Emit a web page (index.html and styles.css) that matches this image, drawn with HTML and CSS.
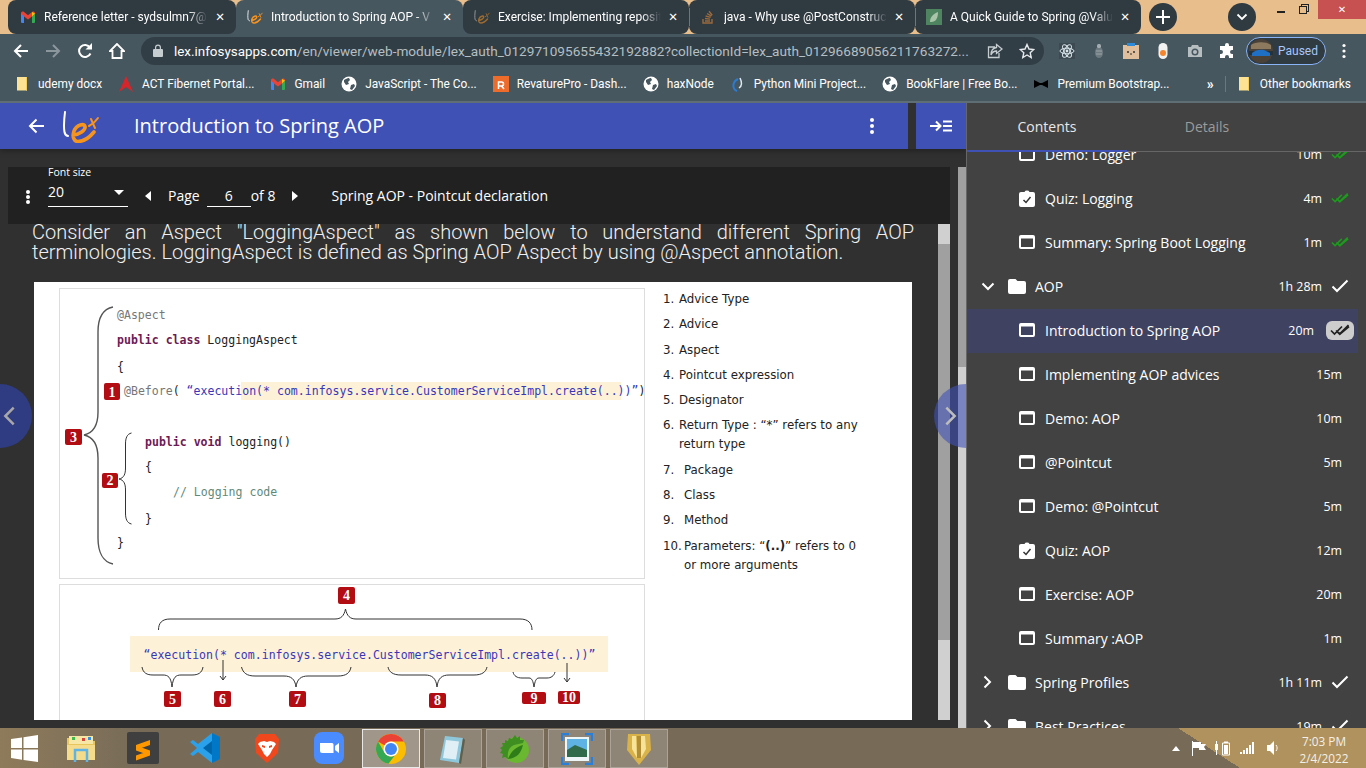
FILE: index.html
```html
<!DOCTYPE html>
<html lang="en">
<head>
<meta charset="utf-8">
<title>Introduction to Spring AOP</title>
<link rel="stylesheet" href="styles.css">
</head>
<body>
<svg class="defs" aria-hidden="true">
  <symbol id="gmail" viewBox="0 0 16 16"><path fill="#4285f4" d="M1 4h3v10H2a1 1 0 0 1-1-1z"/><path fill="#34a853" d="M12 4h3v9a1 1 0 0 1-1 1h-2z"/><path fill="#ea4335" d="M1 4.500C1 2.500 3 2 4 3l4 3.200L12 3c1-1 3-.5 3 1.500L12 7.500 8 10.500 4 7.500z"/><path fill="#fbbc04" d="M12 3l3 1.500L12 7.500z"/></symbol>
  <symbol id="lex" viewBox="0 0 38 32"><path fill="none" stroke="#fff" stroke-width="2" stroke-linecap="round" d="M3 1c-1 8-1.500 15-.5 20 .3 2 1.500 3.500 3.500 4"/><path fill="none" stroke="#f7941d" stroke-width="3.600" stroke-linecap="round" d="M11 24C17 24 24 19 23 15.500 22 12.500 15 13 12 20 10 26 12 30.500 16 30.500 22 30.500 27 27 32 21"/><path fill="none" stroke="#f7941d" stroke-width="2" stroke-linecap="round" d="M29 8l4 9M36 7c-2 3-5 6-9 8"/></symbol>
  <symbol id="globe" viewBox="0 0 16 16"><circle cx="8" cy="8" r="7.500" fill="#fff"/><path fill="#47575f" d="M3 4c2-1 3-2 5-2l1 2-2 2 1 2-3 1-2-3zM10 9l3-1 1 2-3 4-2-1z"/></symbol>
  <symbol id="bmfolder" viewBox="0 0 16 16"><path fill="#fde293" d="M3 1h6l4 0v13.500H3z"/><path fill="#f5ce62" d="M12 1h1v13.500h-1z"/></symbol>
  <symbol id="doc" viewBox="0 0 16 14"><path fill="#fff" fill-rule="evenodd" d="M2 0h12a2 2 0 0 1 2 2v10a2 2 0 0 1-2 2H2a2 2 0 0 1-2-2V2a2 2 0 0 1 2-2zM2 3.500V12h12V3.500z"/></symbol>
  <symbol id="quiz" viewBox="0 0 16 17"><path fill="#fff" d="M2 2h3.500a2.600 2 0 0 1 5 0H14a2 2 0 0 1 2 2v11a2 2 0 0 1-2 2H2a2 2 0 0 1-2-2V4a2 2 0 0 1 2-2z"/><path fill="none" stroke="#333" stroke-width="1.500" d="M4.500 10l2.500 2.500 4.500-5.500"/></symbol>
  <symbol id="folder" viewBox="0 0 18 15"><path fill="#fff" d="M2 0h5.500L9.500 2H16a2 2 0 0 1 2 2v9a2 2 0 0 1-2 2H2a2 2 0 0 1-2-2V2a2 2 0 0 1 2-2z"/></symbol>
  <symbol id="dbl" viewBox="0 0 20 12"><path fill="none" stroke="currentColor" stroke-width="1.700" d="M1 6.500l3.500 3.500L12 2.500M6 6.500l3.500 3.500L18.500 1M8 8l2 2L19 2.500"/></symbol>
  <symbol id="tick" viewBox="0 0 18 14"><path fill="none" stroke="#fff" stroke-width="2" d="M1.500 7.500l4.500 4.500L16.500 1.500"/></symbol>
  <symbol id="chrome" viewBox="0 0 32 32"><circle cx="16" cy="16" r="15" fill="#fbbc04"/><path fill="#ea4335" d="M16 1A15 15 0 0 1 29 8.500H16A7.500 7.500 0 0 0 9.500 12.250L3 8.500A15 15 0 0 1 16 1z"/><path fill="#34a853" d="M3 8.500L9.500 19.750A7.500 7.500 0 0 0 19.750 22.500L13.400 30.800A15 15 0 0 1 3 8.500z"/><circle cx="16" cy="16" r="7.500" fill="#fff"/><circle cx="16" cy="16" r="6" fill="#4285f4"/></symbol>
</svg>

<header class="tabstrip">
  <div class="tabs">
    <div class="tab"><svg class="favicon"><use href="#gmail"/></svg><span class="tab-title">Reference letter - sydsulmn7@</span><span class="tab-x">✕</span></div>
    <div class="tab tab-active"><svg class="favicon"><use href="#lex"/></svg><span class="tab-title">Introduction to Spring AOP - V</span><span class="tab-x">✕</span></div>
    <div class="tab tab-narrow"><svg class="favicon dim"><use href="#lex"/></svg><span class="tab-title">Exercise: Implementing reposit</span><span class="tab-x">✕</span></div>
    <div class="tab tab-narrow sep"><svg class="favicon" viewBox="0 0 16 16"><path fill="none" stroke="#9a6a3c" stroke-width="1.400" d="M3 10v4h9v-4M5 12h5M5 9.500l5 .6M5.600 7l5 1.400M7 4.500l4.400 2.600M9 2.200l3.200 4"/></svg><span class="tab-title">java - Why use @PostConstruc</span><span class="tab-x">✕</span></div>
    <div class="tab tab-narrow sep"><svg class="favicon" viewBox="0 0 16 16"><rect width="16" height="16" fill="#4e8560"/><path fill="#a9c4a8" d="M4 13c0-5 3-8 8-10 0 6-2 10-7 10z"/></svg><span class="tab-title">A Quick Guide to Spring @Valu</span><span class="tab-x">✕</span></div>
  </div>
  <button class="round new-tab" type="button"><svg viewBox="0 0 14 14"><path stroke="#fff" stroke-width="2" d="M7 0v14M0 7h14"/></svg></button>
  <button class="round tab-menu" type="button"><svg viewBox="0 0 12 8"><path fill="none" stroke="#fff" stroke-width="1.800" d="M1.500 1.500L6 6l4.500-4.500"/></svg></button>
  <div class="winctl">
    <span class="min"></span>
    <span class="max"></span>
    <span class="close">✕</span>
  </div>
</header>

<nav class="toolbar">
  <button class="tb" type="button"><svg viewBox="0 0 16 16"><path fill="none" stroke="#fff" stroke-width="2" d="M15 8H2M8 2L2 8l6 6"/></svg></button>
  <button class="tb" type="button"><svg viewBox="0 0 16 16"><path fill="none" stroke="#8b979d" stroke-width="2" d="M1 8h13M8 2l6 6-6 6"/></svg></button>
  <button class="tb" type="button"><svg viewBox="0 0 16 16"><path fill="none" stroke="#fff" stroke-width="2" d="M13.500 10.500A6 6 0 1 1 13 4.500"/><path fill="#fff" d="M15 0v6.500H8.500z"/></svg></button>
  <button class="tb" type="button"><svg viewBox="0 0 16 16"><path fill="none" stroke="#fff" stroke-width="1.800" d="M8 1L1 8h2.500v7h9V8H15z"/></svg></button>
  <div class="omnibox">
    <svg class="lock" viewBox="0 0 10 13"><path fill="#c5cdd1" d="M1 5h1V3.500a3 3 0 0 1 6 0V5h1a1 1 0 0 1 1 1v6a1 1 0 0 1-1 1H1a1 1 0 0 1-1-1V6a1 1 0 0 1 1-1zm2.200 0h3.600V3.500a1.800 1.800 0 0 0-3.600 0z"/></svg>
    <span class="url"><b>lex.infosysapps.com</b>/en/viewer/web-module/lex_auth_012971095655432192882?collectionId=lex_auth_01296689056211763272...</span>
    <svg class="omni-ic" viewBox="0 0 16 16"><path fill="none" stroke="#c5cdd1" stroke-width="1.300" d="M8 4H1.500v10.500H12V10M9.500 1.500L15 6l-5.500 4.500V8C6.500 8 5 9.500 4 12c0-4 2-7 5.500-7.500z"/></svg>
    <svg class="omni-ic star" viewBox="0 0 16 16"><path fill="none" stroke="#e6eaec" stroke-width="1.400" d="M8 1.500l2 4.500 4.800.5-3.600 3.200 1 4.800L8 12l-4.200 2.500 1-4.800L1.200 6.500 6 6z"/></svg>
  </div>
  <div class="ext">
    <button class="tb" type="button"><svg viewBox="0 0 16 16"><rect width="16" height="16" fill="#3d4a51"/><g fill="none" stroke="#d8e4ea" stroke-width="1"><ellipse cx="8" cy="8" rx="7" ry="2.800"/><ellipse cx="8" cy="8" rx="7" ry="2.800" transform="rotate(60 8 8)"/><ellipse cx="8" cy="8" rx="7" ry="2.800" transform="rotate(120 8 8)"/></g><circle cx="8" cy="8" r="1.400" fill="#d8e4ea"/></svg></button>
    <button class="tb" type="button"><svg viewBox="0 0 16 16"><ellipse cx="8" cy="9.500" rx="4" ry="5.500" fill="#6d7a7f"/><rect x="6" y="1" width="4" height="4" rx="1.500" fill="#a3adb1"/><path stroke="#9aa4a8" d="M5 8h6M5 11h6"/></svg></button>
    <button class="tb" type="button"><svg viewBox="0 0 16 16"><rect y="2" width="16" height="14" fill="#e2bf9c"/><rect x="4" width="8" height="3" fill="#2e8bdc"/><circle cx="5" cy="9" r="1" fill="#333"/><circle cx="11" cy="9" r="1" fill="#333"/><path stroke="#333" d="M7 11h2"/></svg></button>
    <button class="tb" type="button"><svg viewBox="0 0 16 16"><rect x="3.500" width="9" height="16" rx="4.500" fill="#f2f2f2"/><circle cx="8" cy="10" r="3" fill="#f5862e"/></svg></button>
    <button class="tb" type="button"><svg viewBox="0 0 16 16"><path fill="#b7bec1" d="M1 4h3l1-2h6l1 2h3v10H1z"/><circle cx="8" cy="9" r="3.500" fill="#47575f"/><circle cx="8" cy="9" r="2" fill="#b7bec1"/></svg></button>
    <button class="tb" type="button"><svg viewBox="0 0 16 16"><path fill="#fff" d="M6 2a2 2 0 0 1 4 0v1h4v4h-1a2 2 0 0 0 0 4h1v4h-4v-1a2 2 0 0 0-4 0v1H1v-4h1a2 2 0 0 0 0-4H1V3h5z"/></svg></button>
  </div>
  <div class="profile">
    <svg class="avatar" viewBox="0 0 24 24"><circle cx="12" cy="12" r="12" fill="#4a4238"/><path fill="#26323a" d="M0 12h24v4H0z"/><path fill="#1f6fc4" d="M3 14c3-3 8-4 12-3l6 3v3H3z"/><path fill="#8d7a5e" d="M2 6c4-3 14-4 20 0v4H2z"/></svg>
    <span>Paused</span>
  </div>
  <button class="tb" type="button"><svg viewBox="0 0 16 16"><g fill="#fff"><circle cx="8" cy="2.500" r="1.600"/><circle cx="8" cy="8" r="1.600"/><circle cx="8" cy="13.500" r="1.600"/></g></svg></button>
</nav>

<nav class="bookmarks">
  <span class="bm"><svg><use href="#bmfolder"/></svg>udemy docx</span>
  <span class="bm"><svg viewBox="0 0 16 16"><path fill="#d7262b" d="M8 0l7 16-7-5-7 5z"/></svg>ACT Fibernet Portal...</span>
  <span class="bm"><svg><use href="#gmail"/></svg>Gmail</span>
  <span class="bm"><svg><use href="#globe"/></svg>JavaScript - The Co...</span>
  <span class="bm"><svg viewBox="0 0 16 16"><rect width="16" height="16" fill="#ee6c2b"/><path fill="none" stroke="#fff" stroke-width="1.500" d="M5.500 13V6h3a2 2 0 0 1 0 4h-3M8.500 10l2.500 3"/></svg>RevaturePro - Dash...</span>
  <span class="bm"><svg><use href="#globe"/></svg>haxNode</span>
  <span class="bm"><svg viewBox="0 0 16 16"><path fill="none" stroke="#2b7bd1" stroke-width="2" d="M7 15C2 13 2 6 8 3"/><path fill="none" stroke="#dfe9f2" stroke-width="1.500" d="M9 12c3-2 3-6 1-10"/></svg>Python Mini Project...</span>
  <span class="bm"><svg><use href="#globe"/></svg>BookFlare | Free Bo...</span>
  <span class="bm"><svg viewBox="0 0 16 16"><path fill="#000" d="M1 4l6 3h2l6-3v8l-6-3H7l-6 3z"/></svg>Premium Bootstrap...</span>
  <span class="bm-more">»</span>
  <span class="bm bm-other"><svg><use href="#bmfolder"/></svg>Other bookmarks</span>
</nav>

<div class="app">
  <main class="viewer">
    <div class="appbar">
      <div class="appbar-main">
        <svg class="back" viewBox="0 0 16 16"><path fill="none" stroke="#fff" stroke-width="2" d="M16 8H2M8.500 1.500L2 8l6.500 6.500"/></svg>
        <svg class="logo"><use href="#lex"/></svg>
        <h1>Introduction to Spring AOP</h1>
        <svg class="kebab" viewBox="0 0 6 16"><g fill="#fff"><circle cx="3" cy="2" r="2"/><circle cx="3" cy="8" r="2"/><circle cx="3" cy="14" r="2"/></g></svg>
      </div>
      <div class="appbar-toggle"><svg viewBox="0 0 22 12"><path fill="none" stroke="#fff" stroke-width="2" d="M0 6h10M6 1.500L10.500 6 6 10.500M13 1.500h9M13 6h9M13 10.500h9"/></svg></div>
    </div>
    <div class="viewer-body">
      <div class="reader">
        <div class="pagebar">
          <svg class="pb-dots" viewBox="0 0 6 14"><g fill="#fff"><circle cx="3" cy="2" r="2"/><circle cx="3" cy="7" r="2"/><circle cx="3" cy="12" r="2"/></g></svg>
          <div class="fontsel">
            <span class="fontsel-label">Font size</span>
            <div class="fontsel-val"><span>20</span><i class="caret"></i></div>
          </div>
          <i class="tri tri-l"></i>
          <span class="pg-label">Page</span>
          <span class="pg-input">6</span>
          <span class="pg-of">of 8</span>
          <i class="tri tri-r"></i>
          <span class="pg-title">Spring AOP - Pointcut declaration</span>
        </div>
        <div class="reader-row">
          <article class="article">
            <p class="intro">Consider an Aspect "LoggingAspect" as shown below to understand different Spring AOP terminologies. LoggingAspect is defined as Spring AOP Aspect by using @Aspect annotation.</p>
            <div class="figure">
              <div class="figure-left">
                <svg class="panel panel-code" viewBox="60 289 584 289">
                  <rect x="241" y="382" width="380" height="18" fill="#fdf2d8"/>
                  <g class="code">
                    <text x="117" y="319" class="anno">@Aspect</text>
                    <text x="117" y="344"><tspan class="kw">public class</tspan> LoggingAspect</text>
                    <text x="117" y="371">{</text>
                    <text x="124" y="395"><tspan class="anno">@Before</tspan>( <tspan class="str">“execution(* com.infosys.service.CustomerServiceImpl.create(..))”</tspan>)</text>
                    <text x="145" y="446"><tspan class="kw">public void</tspan> logging()</text>
                    <text x="145" y="471">{</text>
                    <text x="173" y="496" class="cmt">// Logging code</text>
                    <text x="145" y="523">}</text>
                    <text x="117" y="547">}</text>
                  </g>
                  <path class="brace big" d="M113 307C103 309 98 318 98 332L98 412C98 425 93 433 84 435C93 437 98 445 98 458L98 538C98 552 103 562 113 564"/>
                  <path class="brace" d="M131.500 433C127 434 125.500 438 125.500 444L125.500 468C125.500 474 124 478 119 479C124 480 125.500 484 125.500 490L125.500 513C125.500 519 127 523 131.500 524"/>
                  <g class="badge"><rect x="104" y="383" width="16" height="17" rx="2"/><text x="112" y="397">1</text></g>
                  <g class="badge"><rect x="65" y="429" width="17" height="16" rx="2"/><text x="73.500" y="442">3</text></g>
                  <g class="badge"><rect x="102" y="473" width="16" height="15" rx="2"/><text x="110" y="485">2</text></g>
                </svg>
                <svg class="panel panel-expr" viewBox="60 585 584 135">
                  <rect x="130" y="636" width="478" height="36" fill="#fdf2d8"/>
                  <text class="code str" x="143.500" y="659">“execution(* com.infosys.service.CustomerServiceImpl.create(..))”</text>
                  <path class="brace" d="M158.500 630C158.500 623 162 619 170 619L335 619C341 619 344 616 345.500 609C347 616 350 619 356 619L520 619C528 619 532 623 532 630"/>
                  <path class="brace" d="M142 667C143 673 147 675 153 675L163 675C168 675 171 677 172 687C173 677 176 675 181 675L192 675C198 675 202 673 203 667"/>
                  <path class="brace" d="M241.500 667C243 673 247 676 255 676L284 676C291 676 295 679 296 687C297 679 301 676 308 676L338 676C346 676 350 673 351 667"/>
                  <path class="brace" d="M388 667C389 672 393 675 401 675L425 675C432 675 436 678 437 687C438 678 442 675 449 675L474 675C482 675 486 672 487 667"/>
                  <path class="brace" d="M513 672C514 676 517 678 522 678L529 678C532 678 533 681 534 687C535 681 536 678 539 678L547 678C551 678 554 676 555 672"/>
                  <path class="brace" d="M223 660V680M220 676L223 680L226 676M567 663V682M564 678L567 682L570 678"/>
                  <g class="badge"><rect x="338" y="587" width="17" height="17" rx="2"/><text x="346.500" y="600">4</text></g>
                  <g class="badge"><rect x="164" y="691" width="17" height="16" rx="2"/><text x="172.500" y="704">5</text></g>
                  <g class="badge"><rect x="214" y="691" width="17" height="16" rx="2"/><text x="222.500" y="704">6</text></g>
                  <g class="badge"><rect x="289" y="691" width="17" height="16" rx="2"/><text x="297.500" y="704">7</text></g>
                  <g class="badge"><rect x="429" y="693" width="17" height="15" rx="2"/><text x="437.500" y="705">8</text></g>
                  <g class="badge"><rect x="522" y="692" width="24" height="12" rx="2"/><text x="534" y="703">9</text></g>
                  <g class="badge"><rect x="558" y="691" width="22" height="13" rx="2"/><text x="569" y="702">10</text></g>
                </svg>
              </div>
              <ol class="legend">
                <li><span>1.</span><span>Advice Type</span></li>
                <li><span>2.</span><span>Advice</span></li>
                <li><span>3.</span><span>Aspect</span></li>
                <li><span>4.</span><span>Pointcut expression</span></li>
                <li><span>5.</span><span>Designator</span></li>
                <li><span>6.</span><span>Return Type : “*” refers to any<br>return type</span></li>
                <li class="wide"><span>7.</span><span>Package</span></li>
                <li class="wide"><span>8.</span><span>Class</span></li>
                <li class="wide"><span>9.</span><span>Method</span></li>
                <li class="wide"><span>10.</span><span>Parameters: “<b>(..)</b>” refers to 0<br>or more arguments</span></li>
              </ol>
            </div>
          </article>
          <div class="inner-scroll"><i class="sb-light sb-top"></i><i class="sb-track"></i><i class="sb-light sb-bottom"></i></div>
        </div>
      </div>
      <div class="outer-scroll"><i class="sb-track"></i><i class="sb-light"></i></div>
    </div>
    <div class="navcircle nav-prev"><svg viewBox="0 0 14 24"><path fill="none" stroke="#a8a8a8" stroke-width="3" d="M12 2L2 12l10 10"/></svg></div>
    <div class="navcircle nav-next"><svg viewBox="0 0 14 24"><path fill="none" stroke="#bdbdbd" stroke-width="3" d="M2 2l10 10L2 22"/></svg></div>
  </main>

  <aside class="sidebar">
    <div class="side-tabs">
      <span class="side-tab on">Contents</span>
      <span class="side-tab">Details</span>
    </div>
    <div class="toc">
      <ul class="toc-list">
        <li class="row"><svg class="ic"><use href="#doc"/></svg><span class="name">Demo: Logger</span><span class="time">10m</span><svg class="chk green"><use href="#dbl"/></svg></li>
        <li class="row"><svg class="ic quiz"><use href="#quiz"/></svg><span class="name">Quiz: Logging</span><span class="time">4m</span><svg class="chk green"><use href="#dbl"/></svg></li>
        <li class="row"><svg class="ic"><use href="#doc"/></svg><span class="name">Summary: Spring Boot Logging</span><span class="time">1m</span><svg class="chk green"><use href="#dbl"/></svg></li>
        <li class="row group"><svg class="chev" viewBox="0 0 14 9"><path fill="none" stroke="#fff" stroke-width="2" d="M1.500 1.500L7 7l5.500-5.500"/></svg><svg class="fold"><use href="#folder"/></svg><span class="name">AOP</span><span class="time">1h 28m</span><svg class="chk"><use href="#tick"/></svg></li>
        <li class="row active"><svg class="ic"><use href="#doc"/></svg><span class="name">Introduction to Spring AOP</span><span class="time">20m</span><span class="pill"><svg><use href="#dbl"/></svg></span></li>
        <li class="row"><svg class="ic"><use href="#doc"/></svg><span class="name">Implementing AOP advices</span><span class="time">15m</span></li>
        <li class="row"><svg class="ic"><use href="#doc"/></svg><span class="name">Demo: AOP</span><span class="time">10m</span></li>
        <li class="row"><svg class="ic"><use href="#doc"/></svg><span class="name">@Pointcut</span><span class="time">5m</span></li>
        <li class="row"><svg class="ic"><use href="#doc"/></svg><span class="name">Demo: @Pointcut</span><span class="time">5m</span></li>
        <li class="row"><svg class="ic quiz"><use href="#quiz"/></svg><span class="name">Quiz: AOP</span><span class="time">12m</span></li>
        <li class="row"><svg class="ic"><use href="#doc"/></svg><span class="name">Exercise: AOP</span><span class="time">20m</span></li>
        <li class="row"><svg class="ic"><use href="#doc"/></svg><span class="name">Summary :AOP</span><span class="time">1m</span></li>
        <li class="row group"><svg class="chev right" viewBox="0 0 9 14"><path fill="none" stroke="#fff" stroke-width="2" d="M1.500 1.500L7 7l-5.500 5.500"/></svg><svg class="fold"><use href="#folder"/></svg><span class="name">Spring Profiles</span><span class="time">1h 11m</span><svg class="chk"><use href="#tick"/></svg></li>
        <li class="row group"><svg class="chev right" viewBox="0 0 9 14"><path fill="none" stroke="#fff" stroke-width="2" d="M1.500 1.500L7 7l-5.500 5.500"/></svg><svg class="fold"><use href="#folder"/></svg><span class="name">Best Practices</span><span class="time">19m</span><svg class="chk"><use href="#tick"/></svg></li>
      </ul>
    </div>
  </aside>
</div>

<footer class="taskbar">
  <div class="tk-start"><svg viewBox="0 0 27 27"><path fill="#fff" d="M0 4l11-1.600V13H0zM12.500 2.200L27 0v13H12.500zM0 14.500h11v10.300L0 23zM12.500 14.500H27V27l-14.500-2z"/></svg></div>
  <div class="tk"><svg viewBox="0 0 32 32"><path fill="#e8c65e" d="M2 6h11l2 3h15v19H2z"/><path fill="#f7e7a6" d="M4 4h24v8H4z"/><rect x="7" y="5" width="3" height="3" fill="#3ebd4e"/><rect x="17" y="6" width="3" height="3" fill="#d9453a"/><rect x="23" y="5" width="3" height="3" fill="#3e8fd9"/><path fill="#f4dc8c" d="M2 13h28v15H2z"/><path fill="none" stroke="#5fb4e5" stroke-width="2.500" d="M10 30V18h12v12"/></svg></div>
  <div class="tk"><svg viewBox="0 0 32 32"><rect width="32" height="32" rx="2" fill="#3f3f3f"/><path fill="#ff9800" d="M9 13L23 8v5L9 18zM9 13.500L23 18.500v5L9 18.500zM23 18.500v5L9 28.500v-5z"/></svg></div>
  <div class="tk"><svg viewBox="0 0 32 32"><path fill="#0078c8" d="M23 1l8 4v22l-8 4z"/><path fill="#2aa1ea" d="M23 1v30L9 20l-5 4-3-2 7-6-7-6 3-2 5 4z"/><path fill="#0065a9" d="M23 9v14l-9-7z"/></svg></div>
  <div class="tk"><svg viewBox="0 0 32 32"><path fill="#f1471d" d="M8 2h16l4 5-1 14-11 10L5 21 4 7z"/><path fill="#fff" d="M9 10l4-1 3 1 3-1 4 1 2 2-4 6-2 4-3 3-3-3-2-4-4-6z"/><path fill="#f1471d" d="M11 13l3 1 0 2-3-1zM21 13l-3 1 0 2 3-1z"/></svg></div>
  <div class="tk"><svg viewBox="0 0 32 32"><rect width="30" height="32" x="1" rx="8" fill="#4a8cff"/><path fill="#fff" d="M7 11h12a1.500 1.500 0 0 1 1.500 1.500V21H9a2 2 0 0 1-2-2zM22 14l4-3v10l-4-3z"/></svg></div>
  <div class="tk run run-on"><svg><use href="#chrome"/></svg></div>
  <div class="tk run"><svg viewBox="0 0 32 32"><path fill="#8ec7dc" d="M8 3l18 2-4 25L3 27z"/><path fill="#dfeff5" d="M9 7l13 1.500-3 18L6 25z"/><path fill="#5f5f4a" d="M26 5l2 2-4 24-2-1z"/></svg></div>
  <div class="tk run"><svg viewBox="0 0 32 32"><circle cx="17" cy="17" r="13" fill="#6ab82f"/><path fill="#3f8e22" d="M16 2l2 3 3-2v4l4 0-1 3-9 2c-5 2-7 7-6 14l-3-2-3 1 1-4-3-1 2-3-2-2 3-2-1-3 3 0 0-3 3 1 1-3 3 1z"/><path fill="#2e7d18" d="M9 26c3-8 8-12 15-14-2 8-6 13-15 14z"/></svg></div>
  <div class="tk run"><svg viewBox="0 0 32 32"><rect x="4" y="4" width="24" height="24" fill="#eef5f7"/><rect x="6" y="6" width="20" height="11" fill="#5eb2e4"/><path fill="#2f6a4a" d="M6 17l8-5 12 5v7H6z"/><path fill="none" stroke="#2b7fd6" stroke-width="2.500" d="M1 8V1h7M24 1h7v7M31 24v7h-7M8 31H1v-7"/></svg></div>
  <div class="tk run"><svg viewBox="0 0 32 32"><path fill="#d9b24a" d="M5 1h22l1 16-12 15L4 17z"/><path fill="#f7e39a" d="M9 3h4l1 22-5-9zM18 3h4l1 13-5 9z"/><path fill="#8a6a1e" d="M14 3h4v22h-4z" opacity=".5"/></svg></div>
  <div class="tray">
    <i class="tray-up"></i>
    <svg class="tray-flag" viewBox="0 0 16 16"><path fill="#fff" d="M1 1h1v15H1z"/><path fill="#fff" d="M2 2h8v2h5l-2 3 2 3H8V8H2z"/></svg>
    <svg class="tray-bat" viewBox="0 0 16 16"><path fill="none" stroke="#fff" d="M8.500 3h7v12h-7z"/><path fill="#fff" d="M10 1.500h4V3h-4zM10 5h4v9h-4zM2 1h1v3h1v6H1V4h1zM2 10h1v5H2z"/></svg>
    <svg class="tray-net" viewBox="0 0 16 16"><path fill="#fff" d="M0 12h2v2H0zM3 10h2v4H3zM6 8h2v6H6zM9 5h2v9H9zM12 2h2v12h-2z"/></svg>
    <svg class="tray-vol" viewBox="0 0 16 16"><path fill="#fff" d="M1 5h3l4-4v14l-4-4H1z"/><path fill="none" stroke="#fff" d="M10 5c1.500 2 1.500 4 0 6"/></svg>
    <div class="clock"><span>7:03 PM</span><span>2/4/2022</span></div>
  </div>
</footer>
</body>
</html>
```

FILE: styles.css
```css
* { box-sizing: border-box; }
html, body { margin: 0; padding: 0; }
body { width: 1366px; height: 768px; overflow: hidden; font-family: "Open Sans", sans-serif; background: #303030; color: #fff; }
button { border: 0; padding: 0; background: none; }
ul, ol { list-style: none; margin: 0; padding: 0; }
.defs { position: absolute; width: 0; height: 0; }

/* tab strip */
.tabstrip { height: 34px; background: #e8be8c; display: flex; align-items: stretch; padding-left: 8px; font-family: Roboto, sans-serif; font-size: 12px; }
.tabs { display: flex; flex: none; }
.tab { position: relative; width: 228px; display: flex; align-items: center; padding: 0 9px 0 12px; background: #2f3a41; border-radius: 8px; }
.tab-narrow { width: 226px; padding-left: 11px; }
.tab-narrow.sep::before { content: ""; position: absolute; left: 0; top: 8px; height: 18px; width: 1px; background: #6a777e; }
.tab-active { background: #47575f; border-radius: 8px 8px 0 0; z-index: 0; width: 227px; padding-left: 11px; }
.tab-active::before, .tab-active::after { content: ""; position: absolute; bottom: 0; width: 8px; height: 8px; background: #47575f; z-index: -1; }
.tab-active::before { left: -8px; }
.tab-active::after { right: -8px; }
.tab:first-child, .tab-active + .tab { z-index: 1; }
.favicon { width: 16px; height: 16px; flex: none; margin-right: 8px; }
.favicon.dim { opacity: .55; }
.tab-title { flex: 1; min-width: 0; white-space: nowrap; -webkit-mask-image: linear-gradient(90deg, #000 88%, transparent 100%); mask-image: linear-gradient(90deg, #000 88%, transparent 100%); }
.tab-x { flex: none; width: 14px; margin-left: 5px; font-size: 11.500px; text-align: center; font-family: "DejaVu Sans", sans-serif; font-weight: 700; }
.round { flex: none; width: 28px; height: 28px; margin-top: 3px; border-radius: 50%; background: #2f3a41; display: flex; align-items: center; justify-content: center; }
.new-tab { margin-left: 8px; }
.new-tab svg { width: 14px; height: 14px; }
.tab-menu { margin-left: 51px; }
.tab-menu svg { width: 12px; height: 8px; }
.winctl { flex: none; display: flex; width: 110px; height: 19px; }
.min { flex: none; width: 8px; height: 2px; background: #222; margin: 11px 0 0 21px; }
.max { flex: none; width: 8px; height: 8px; border: 1px solid #222; margin: 6px 0 0 14px; box-shadow: 2px -2px 0 -1px #e8be8c, 2px -2px 0 0 #222; }
.close { flex: none; width: 48px; margin-left: auto; background: #c75050; text-align: center; line-height: 19px; font-size: 10px; font-family: "DejaVu Sans", sans-serif; font-weight: 700; }

/* toolbar */
.toolbar { height: 33px; background: #47575f; display: flex; align-items: center; padding-left: 5px; font-family: Roboto, sans-serif; }
.tb { flex: none; width: 32px; height: 32px; display: flex; align-items: center; justify-content: center; }
.tb svg { width: 16px; height: 16px; }
.omnibox { flex: none; margin-left: 8px; width: 903px; height: 28px; border-radius: 14px; background: #323e45; display: flex; align-items: center; padding-left: 12px; font-size: 13.620px; }
.lock { width: 10px; height: 13px; flex: none; margin-right: 11px; }
.url { flex: none; width: 807px; white-space: nowrap; color: #b4bec3; }
.url b { color: #fff; font-weight: 400; font-size: 13.400px; }
.omni-ic { width: 16px; height: 16px; flex: none; margin-left: 6px; }
.omni-ic.star { margin-left: 16px; }
.ext { display: flex; margin-left: 7px; }
.profile { flex: none; width: 80px; height: 28px; margin-left: 3px; border: 1px solid #8ab4f8; border-radius: 14px; background: #2f3a41; display: flex; align-items: center; gap: 5px; padding-left: 2px; font-size: 12px; color: #a8c7fa; }
.avatar { width: 24px; height: 24px; flex: none; }
.profile + .tb { margin-left: 2px; }

/* bookmarks */
.bookmarks { height: 36px; background: #47575f; border-bottom: 2px solid #5f6e75; padding: 0 15px 0 14px; display: flex; align-items: center; gap: 16px; font-family: Roboto, sans-serif; font-size: 11.880px; white-space: nowrap; }
.bm { display: flex; align-items: center; gap: 8px; }
.bm svg { width: 16px; height: 16px; flex: none; }
.bm-more { margin-left: auto; font-size: 14px; font-weight: 700; padding-right: 3px; }
.bm-other { border-left: 1px solid #6a777e; padding-left: 10px; margin-left: -8px; }

/* main */
.app { height: 625px; display: flex; }
.viewer { position: relative; width: 967px; flex: none; display: flex; flex-direction: column; background: #303030; overflow: hidden; border-right: 1px solid #666; }
.appbar { height: 46px; flex: none; display: flex; justify-content: space-between; box-shadow: 0 2px 6px rgba(0,0,0,.3); }
.appbar-main { width: 908px; background: #3f51b5; display: flex; align-items: center; padding: 0 33px 0 28px; }
.back { width: 16px; height: 16px; flex: none; }
.logo { width: 38px; height: 32px; flex: none; margin: 2px 0 0 18px; }
.appbar h1 { flex: 1; margin: -2px 0 0 34px; font-size: 20px; font-weight: 400; }
.kebab { width: 6px; height: 16px; flex: none; }
.appbar-toggle { width: 50px; background: #3f51b5; display: flex; align-items: center; justify-content: center; }
.appbar-toggle svg { width: 22px; height: 12px; }
.viewer-body { flex: 1; min-height: 0; display: flex; padding: 18px 0 0 8px; }
.reader { width: 942px; flex: none; display: flex; flex-direction: column; height: 553px; }
.pagebar { height: 57px; flex: none; background: #212121; display: flex; font-size: 14px; padding-left: 17px; position: relative; }
.pb-dots { width: 6px; height: 14px; flex: none; margin-top: 23px; }
.fontsel { width: 80px; flex: none; margin-left: 17px; border-bottom: 1px solid #fff; height: 40px; display: flex; flex-direction: column; }
.fontsel-label { font-size: 10.500px; line-height: 14px; margin-top: -2px; }
.fontsel-val { display: flex; justify-content: space-between; align-items: center; padding: 0 4px 0 0; line-height: 20px; margin-top: 3px; }
.caret { width: 0; height: 0; border: 5px solid transparent; border-top: 5px solid #fff; border-bottom: 0; }
.tri { flex: none; width: 0; height: 0; border: 5px solid transparent; margin-top: 24px; }
.tri-l { border-right: 6px solid #fff; border-left: 0; margin-left: 17px; }
.tri-r { border-left: 6px solid #fff; border-right: 0; margin-left: 17px; }
.pg-label { margin-left: 17px; line-height: 20px; margin-top: 19px; }
.pg-input { width: 44px; height: 21px; margin: 19px 0 0 7px; border-bottom: 1px solid #fff; text-align: center; line-height: 20px; }
.pg-of { line-height: 20px; margin-top: 19px; }
.pg-title { margin: 19px 0 0 33px; line-height: 20px; }
.reader-row { flex: 1; min-height: 0; display: flex; }
.article { width: 930px; flex: none; padding: 0 24px; overflow: hidden; }
.intro { margin: -2px 0 20px; font-family: Roboto, sans-serif; font-weight: 300; font-size: 20px; line-height: 20px; text-align: justify; color: #f0f0f0; }
.figure { margin: 0 2px; height: 438px; background: #fff; display: flex; padding: 6px 0 0 25px; overflow: hidden; }
.figure-left { width: 586px; flex: none; display: flex; flex-direction: column; gap: 5px; }
.panel { display: block; width: 586px; flex: none; border: 1px solid #ddd; background: #fff; }
.panel-code { height: 291px; }
.panel-expr { height: 137px; }
.code text, text.code { font-family: "DejaVu Sans Mono", monospace; font-size: 11.560px; fill: #222; }
.code .anno { fill: #777; }
.code .kw { fill: #6d1a55; font-weight: 700; }
.str, text.str { fill: #3a36b8; }
.code .str { fill: #3a36b8; }
.code .cmt { fill: #5f8a7a; }
.brace { fill: none; stroke: #333; stroke-width: 1; }
.brace.big { stroke: #555; stroke-width: 1.400; }
.badge rect { fill: #b20d12; }
.badge text { fill: #fff; font-family: "Liberation Serif", serif; font-weight: 700; font-size: 14px; text-anchor: middle; }
.legend { margin: 2px 0 0 18px; font-family: "DejaVu Sans", sans-serif; font-size: 11.800px; line-height: 19px; color: #222; white-space: nowrap; }
.legend li { display: grid; grid-template-columns: 16px 1fr; margin-bottom: 6.300px; }
.legend li.wide { grid-template-columns: 21px 1fr; }
.inner-scroll, .outer-scroll { flex: none; display: flex; flex-direction: column; }
.inner-scroll { width: 12px; height: 496px; }
.sb-top { height: 20px; flex: none; }
.sb-bottom { height: 80px; flex: none; }
.sb-track { flex: 1; background: #a0a0a0; display: block; }
.sb-light { background: #d0d0d0; display: block; }
.outer-scroll { width: 8px; margin-left: 8px; }
.outer-scroll .sb-track { flex: none; height: 200px; }
.outer-scroll .sb-light { flex: 1; }
.navcircle { position: absolute; top: 281px; width: 64px; height: 64px; border-radius: 50%; display: flex; align-items: center; }
.nav-prev { left: -32px; background: #2f3c82; justify-content: flex-end; padding-right: 16px; }
.nav-next { left: 934px; background: rgba(63,81,181,.6); padding-left: 10px; }
.navcircle svg { width: 13px; height: 20px; }

/* sidebar */
.sidebar { width: 399px; flex: none; background: #424242; display: flex; flex-direction: column; }
.side-tabs { height: 49px; flex: none; display: flex; border-bottom: 1px solid #666; }
.side-tab { position: relative; width: 160px; text-align: center; font-size: 14px; line-height: 47px; color: #9b9b9b; font-weight: 500; }
.side-tab.on { color: #e8e8e8; }
.side-tab.on::after { content: ""; position: absolute; left: 0; right: 0; bottom: -1px; height: 2px; background: #3f51b5; }
.toc { flex: 1; min-height: 0; overflow: hidden; }
.toc-list { margin-top: -19px; }
.row { height: 44px; margin-right: 8px; display: flex; align-items: center; padding: 0 16px 2px 52px; font-size: 14px; }
.ic { width: 16px; height: 14px; flex: none; margin-right: 10px; }
.ic.quiz { height: 17px; }
.name { flex: 1; white-space: nowrap; }
.time { font-size: 12.400px; }
.chk { width: 18px; height: 14px; flex: none; margin-left: 9px; }
.row:has(.chk), .row:has(.pill) { padding-right: 9px; }
.green { color: #1c9a1c; height: 12px; }
.group { padding-left: 14px; }
.chev { width: 14px; height: 9px; flex: none; margin-right: 13px; }
.chev.right { width: 9px; height: 14px; margin: 0 16px 0 2px; }
.fold { width: 18px; height: 15px; flex: none; margin-right: 9px; }
.active { background: #404262; }
.row.active { padding-right: 4px; }
.pill { width: 28px; height: 19px; flex: none; margin-left: 12px; border-radius: 6px; background: #cdcdcd; color: #222; display: flex; align-items: center; justify-content: center; }
.pill svg { width: 20px; height: 12px; }

/* taskbar */
.taskbar { height: 40px; display: flex; background: linear-gradient(90deg, rgba(176,146,94,.4), rgba(176,146,94,0) 140px), linear-gradient(32.800deg, #776b58 671.700px, #b0925e 671.700px); }
.tk-start { width: 50px; flex: none; display: flex; align-items: center; padding-left: 11px; }
.tk-start svg { width: 27px; height: 27px; }
.tk { width: 62px; flex: none; display: flex; align-items: center; justify-content: center; }
.tk svg { width: 32px; height: 32px; }
.tk.run { width: 58px; margin: 1px 2px 0; background: rgba(255,255,255,.18); border: 1px solid rgba(255,255,255,.25); }
.tk.run-on { background: rgba(255,255,255,.3); border-color: #e8e8e8; }
.tray { margin-left: auto; display: flex; align-items: center; font-size: 11.800px; padding-right: 14px; }
.tray svg { width: 16px; height: 16px; flex: none; }
.tray-up { width: 0; height: 0; border: 4px solid transparent; border-bottom: 5px solid #fff; border-top: 0; }
.tray-flag { margin-left: 11px; }
.tray-bat { margin-left: 7px; }
.tray-net { margin-left: 10px; }
.tray-vol { margin-left: 10px; }
.clock { display: flex; flex-direction: column; align-items: center; width: 56px; margin: 3px 0 0 14px; line-height: 17px; color: #f4f0e6; font-family: "Open Sans", sans-serif; }
```
